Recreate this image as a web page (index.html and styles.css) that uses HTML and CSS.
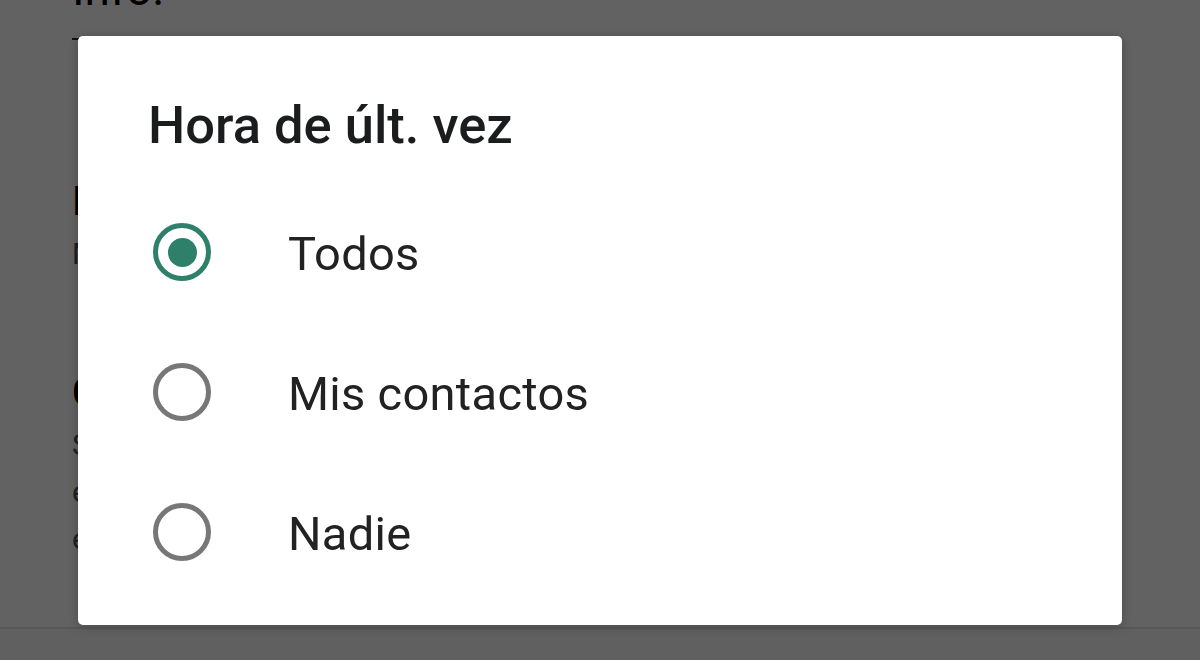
FILE: index.html
```html
<!DOCTYPE html>
<html lang="es">
<head>
  <meta charset="UTF-8">
  <title>Privacidad</title>
  <link rel="stylesheet" href="styles.css">
</head>
<body>
  <div class="page">
    <p class="desc top">Info.</p>
    <div class="rule"></div>
    <div class="setting">
      <div class="name">Info.</div>
      <div class="value">Mis contactos</div>
    </div>
    <div class="setting">
      <div class="name">Confirmaciones de lectura</div>
      <div class="value">Si las desactivas, no podrás enviar ni recibir<br>estas confirmaciones. Las confirmaciones se<br>envían siempre en los chats de grupo.</div>
    </div>
    <div class="bottom-bar"></div>
  </div>

  <div class="scrim"></div>

  <div class="dialog">
    <h1 class="dialog-title">Hora de últ. vez</h1>
    <div class="option">
      <span class="radio checked"></span>
      <span class="option-label">Todos</span>
    </div>
    <div class="option">
      <span class="radio"></span>
      <span class="option-label">Mis contactos</span>
    </div>
    <div class="option">
      <span class="radio"></span>
      <span class="option-label">Nadie</span>
    </div>
  </div>
</body>
</html>
```

FILE: styles.css
```css
html, body {
  margin: 0;
  padding: 0;
  height: 100%;
}
body {
  font-family: Roboto, 'Noto Sans', Arial, sans-serif;
  background: #fff;
  overflow: hidden;
}
.page {
  height: 660px;
  display: flex;
  flex-direction: column;
  padding-left: 72px;
  box-sizing: border-box;
}
.desc {
  margin: 0;
  color: #555;
  font-size: 46px;
  line-height: 54px;
}
.desc.top {
  margin-top: -38px;
  color: #000;
}
.rule {
  width: 20px;
  height: 2px;
  background: #333;
  margin-top: 22px;
}
.setting {
  margin-top: 140px;
}
.setting + .setting {
  margin-top: 94px;
}
.name {
  font-size: 40px;
  font-weight: 500;
  color: #000;
  line-height: 44px;
}
.value {
  font-size: 30px;
  color: #555;
  line-height: 47px;
  margin-top: 6px;
  white-space: nowrap;
}
.bottom-bar {
  margin-top: auto;
  margin-left: -72px;
  height: 31px;
  border-top: 2px solid #e6e6e6;
  background: #fafafa;
}
.scrim {
  position: fixed;
  inset: 0;
  background: rgba(0, 0, 0, 0.615);
}
.dialog {
  position: absolute;
  left: 78px;
  top: 36px;
  width: 1044px;
  height: 589px;
  background: #fff;
  border-radius: 5px;
  box-shadow: 0 2px 10px rgba(0, 0, 0, 0.25);
}
.dialog-title {
  margin: 0;
  padding: 63px 0 0 70px;
  height: 83px;
  font-size: 52.5px;
  line-height: 52px;
  font-weight: 500;
  color: #1b1c1e;
}
.option {
  display: flex;
  align-items: center;
  height: 140px;
  padding-left: 75px;
}
.radio {
  width: 58px;
  height: 58px;
  box-sizing: border-box;
  border: 5.5px solid #777;
  border-radius: 50%;
  display: flex;
  align-items: center;
  justify-content: center;
  flex-shrink: 0;
}
.radio.checked {
  border-color: #2f806a;
}
.radio.checked::after {
  content: "";
  width: 29px;
  height: 29px;
  border-radius: 50%;
  background: #2f806a;
}
.option-label {
  margin-left: 77px;
  padding-top: 3px;
  font-size: 47px;
  color: #222;
  letter-spacing: 0.3px;
}
```
